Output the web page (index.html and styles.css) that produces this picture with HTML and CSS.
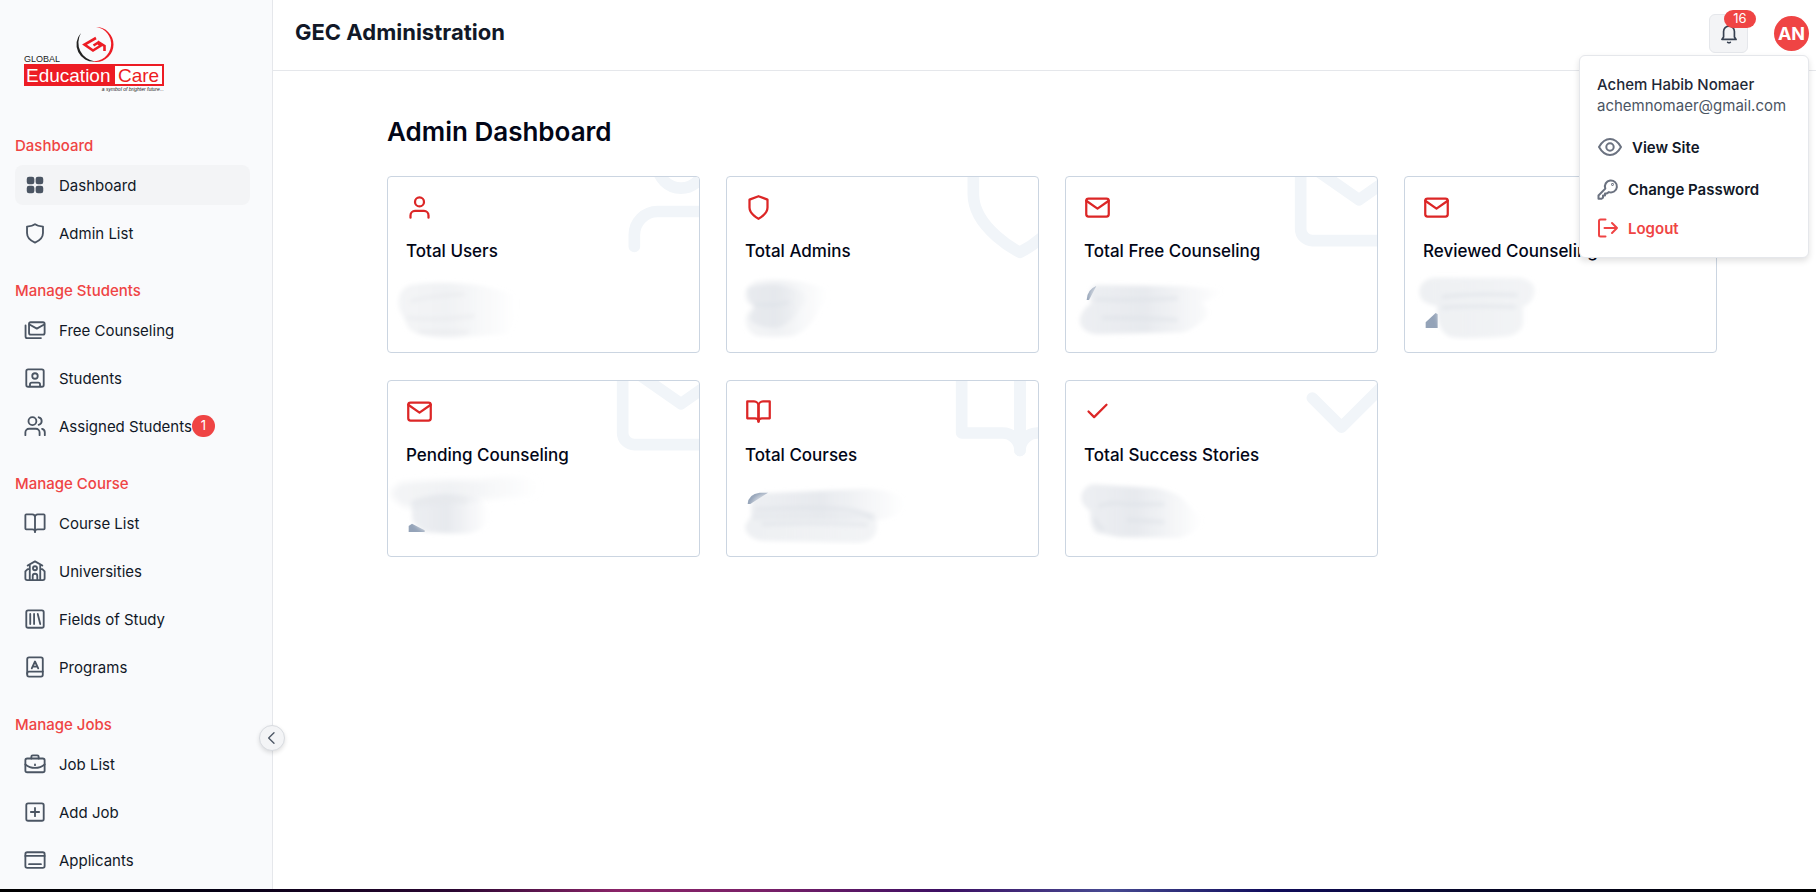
FILE: index.html
```html
<!DOCTYPE html>
<html lang="en">
<head>
<meta charset="utf-8">
<title>GEC Administration</title>
<link rel="stylesheet" href="styles.css">
</head>
<body>
<svg class="sprite" aria-hidden="true">
  <defs>
    <symbol id="user" viewBox="0 0 24 24"><path d="M20 21v-2a4 4 0 0 0-4-4H8a4 4 0 0 0-4 4v2"/><circle cx="12" cy="7" r="4"/></symbol>
    <symbol id="shield" viewBox="0 0 24 24"><path d="M12 22s8-4 8-10V5l-8-3-8 3v7c0 6 8 10 8 10z"/></symbol>
    <symbol id="mail" viewBox="0 0 24 24"><path d="M4 4h16a2 2 0 0 1 2 2v12a2 2 0 0 1-2 2H4a2 2 0 0 1-2-2V6a2 2 0 0 1 2-2z"/><path d="M22 6l-10 7L2 6"/></symbol>
    <symbol id="book" viewBox="0 0 24 24"><path d="M2 3h6a4 4 0 0 1 4 4v14a3 3 0 0 0-3-3H2z"/><path d="M22 3h-6a4 4 0 0 0-4 4v14a3 3 0 0 1 3-3h7z"/></symbol>
    <symbol id="check" viewBox="0 0 24 24"><path d="M20 6L9 17l-5-5"/></symbol>
    <linearGradient id="fade"><stop offset="0" stop-color="#e3e6eb" stop-opacity=".65"/><stop offset=".45" stop-color="#e3e6eb" stop-opacity=".85"/><stop offset="1" stop-color="#e3e6eb" stop-opacity="0"/></linearGradient>
    <linearGradient id="fade-light"><stop offset="0" stop-color="#eceef1" stop-opacity=".6"/><stop offset=".4" stop-color="#eceef1" stop-opacity=".8"/><stop offset="1" stop-color="#eceef1" stop-opacity="0"/></linearGradient>
    <linearGradient id="solid"><stop offset="0" stop-color="#e6e9ed" stop-opacity=".7"/><stop offset="1" stop-color="#e6e9ed" stop-opacity=".5"/></linearGradient>
    <filter id="soft" x="-20%" y="-30%" width="140%" height="160%"><feGaussianBlur stdDeviation="6"/></filter>
    <filter id="softer" x="-20%" y="-100%" width="140%" height="300%"><feGaussianBlur stdDeviation="9"/></filter>
  </defs>
</svg>
<div class="app">
  <aside class="sidebar">
    <a class="logo" href="#" aria-label="Global Education Care">
      <svg width="142" height="68" viewBox="23 25 142 68">
        <path d="M81 33a17 17 0 0 0 14 28.500a19 19 0 0 1-14-28.500z" fill="#222"/>
        <path d="M96 27a17.500 17.500 0 0 1 0 35l-4-1a16.500 16.500 0 0 0 4-34z" fill="#ed1c24"/>
        <path d="M96 38L84.500 44.500l8.500 6 8-5-3.500-2.500-4 2.500M97.500 41.500l7 4.500v5" fill="none" stroke="#ed1c24" stroke-width="2.600" stroke-linecap="butt" stroke-linejoin="miter"/>
        <rect x="24" y="64" width="140" height="22" fill="#ed1c24"/>
        <rect x="115" y="66" width="47" height="18" fill="#fff"/>
        <text x="24" y="62" class="logo-global">GLOBAL</text>
        <text x="26" y="82" class="logo-main">Education</text>
        <text x="118" y="82" class="logo-main logo-red">Care</text>
        <text x="164" y="91" text-anchor="end" class="logo-tag">a symbol of brighter future...</text>
      </svg>
    </a>
    <nav class="nav">
      <section class="group">
        <h2>Dashboard</h2>
        <a class="item active" href="#"><svg class="ico filled" viewBox="0 0 24 24"><rect x="3" y="3" width="8.300" height="8.300" rx="2.500"/><rect x="12.700" y="3" width="8.300" height="8.300" rx="2.500"/><rect x="3" y="12.700" width="8.300" height="8.300" rx="2.500"/><rect x="12.700" y="12.700" width="8.300" height="8.300" rx="2.500"/></svg>Dashboard</a>
        <a class="item" href="#"><svg class="ico" viewBox="0 0 24 24"><path d="M12 2.300c2.500 2 5.500 2.400 8.700 2.700v7c0 5-4 8.500-8.700 10.500C7.300 20.500 3.300 17 3.300 12V5C6.500 4.700 9.500 4.300 12 2.300z"/></svg>Admin List</a>
      </section>
      <section class="group">
        <h2>Manage Students</h2>
        <a class="item" href="#"><svg class="ico" viewBox="0 0 24 24"><rect x="5.500" y="3.500" width="17" height="13.500" rx="1.800"/><path d="M6 6l8 4.500L22 6M1.700 7v12a1.800 1.800 0 0 0 1.800 1.800h15"/></svg>Free Counseling</a>
        <a class="item" href="#"><svg class="ico" viewBox="0 0 24 24"><rect x="2.500" y="2.500" width="19" height="19" rx="2"/><circle cx="12" cy="9.800" r="3"/><path d="M6.500 21v-2a2 2 0 0 1 2-2h7a2 2 0 0 1 2 2v2"/></svg>Students</a>
        <a class="item" href="#"><svg class="ico" viewBox="0 0 24 24"><path d="M17 22v-3a4 4 0 0 0-4-4H5.500a4 4 0 0 0-4 4v3M22.700 22v-3a4 4 0 0 0-3-3.900M16 2.500a4.200 4.200 0 0 1 0 8.200"/><circle cx="9.200" cy="6.700" r="4.300"/></svg>Assigned Students<span class="count">1</span></a>
      </section>
      <section class="group">
        <h2>Manage Course</h2>
        <a class="item" href="#"><svg class="ico" viewBox="0 0 24 24"><path d="M12 22V5.500a3 3 0 0 0-3-3H2.500a1 1 0 0 0-1 1V18a1 1 0 0 0 1 1H9c1.700 0 3 1 3 2.500 0-1.500 1.300-2.500 3-2.500h6.500a1 1 0 0 0 1-1V3.500a1 1 0 0 0-1-1H15a3 3 0 0 0-3 3"/></svg>Course List</a>
        <a class="item" href="#"><svg class="ico" viewBox="0 0 24 24"><path d="M4 6l8-4.500L20 6M6.300 5v17M17.700 5v17M6.300 10H4l-2.500 2.500V20a2 2 0 0 0 2 2h17a2 2 0 0 0 2-2v-7.500L20 10h-2.300M9.500 22v-4.500a2.500 2.500 0 0 1 5 0V22"/><circle cx="12" cy="9" r="2.200"/></svg>Universities</a>
        <a class="item" href="#"><svg class="ico" viewBox="0 0 24 24"><rect x="2.500" y="2.500" width="19" height="19" rx="2"/><path d="M6.800 6.500v11M11 6.500v11M15 6.500l2.700 11"/></svg>Fields of Study</a>
        <a class="item" href="#"><svg class="ico" viewBox="0 0 24 24"><rect x="3.500" y="1.500" width="17" height="21" rx="2"/><path d="M3.500 19.500a2 2 0 0 1 2-2.500h15M8.500 13.500L12 6l3.500 7.500M9.500 11.500h5"/></svg>Programs</a>
      </section>
      <section class="group">
        <h2>Manage Jobs</h2>
        <a class="item" href="#"><svg class="ico" viewBox="0 0 24 24"><rect x="1.500" y="6" width="21" height="15" rx="2"/><path d="M8 6V4a1.500 1.500 0 0 1 1.500-1.500h5A1.500 1.500 0 0 1 16 4v2M1.500 12.500c6 5 15 5 21 0M12 12.500v.8"/></svg>Job List</a>
        <a class="item" href="#"><svg class="ico" viewBox="0 0 24 24"><rect x="2.500" y="2.500" width="19" height="19" rx="2"/><path d="M12 7.500v9M7.500 12h9"/></svg>Add Job</a>
        <a class="item" href="#"><svg class="ico" viewBox="0 0 24 24"><rect x="1.500" y="3.500" width="21" height="17" rx="2"/><path d="M1.500 7.500h21M5.500 16.500h13"/></svg>Applicants</a>
      </section>
    </nav>
    <button class="collapse" aria-label="Collapse sidebar"><svg width="16" height="16" viewBox="0 0 24 24"><path d="M15 4l-8 8 8 8"/></svg></button>
  </aside>
  <div class="page">
    <header class="topbar">
      <h1>GEC Administration</h1>
      <div class="tools">
        <button class="bell" aria-label="Notifications">
          <svg width="20" height="20" viewBox="0 0 24 24"><path d="M3.500 18.500h17L18.500 15.500V9a6.500 6.500 0 0 0-13 0v6.500zM10.500 22q1.500 1 3 0"/></svg>
          <span class="badge">16</span>
        </button>
        <div class="account">
          <button class="avatar" aria-haspopup="true" aria-expanded="true">AN</button>
          <div class="menu">
            <p class="name">Achem Habib Nomaer</p>
            <p class="email">achemnomaer@gmail.com</p>
            <a href="#"><svg width="26" height="26" viewBox="0 0 26 26"><path d="M2 13c3-5.300 6.700-8 11-8s8 2.700 11 8c-3 5.300-6.700 8-11 8s-8-2.700-11-8z"/><circle cx="13" cy="13" r="3.700"/></svg>View Site</a>
            <a href="#"><svg width="22" height="22" viewBox="0 0 22 22"><path d="M8.300 10.600a6 6 0 1 1 3.600 3.500l-2.400 1.500H8v2H6v2l-1.500 1.200H1.500v-3.300z"/><circle cx="15.500" cy="6.500" r=".4"/></svg>Change Password</a>
            <a class="logout" href="#"><svg width="22" height="22" viewBox="0 0 22 22"><path d="M8.500 2.500h-5a1.500 1.500 0 0 0-1.500 1.500v14a1.500 1.500 0 0 0 1.500 1.500h5M7.500 11H20M15 6l5 5-5 5"/></svg>Logout</a>
          </div>
        </div>
      </div>
    </header>
    <main class="content">
      <h2>Admin Dashboard</h2>
      <div class="cards">
        <article class="card">
          <svg class="ghost" aria-hidden="true"><use href="#user"/></svg>
          <svg class="mark" aria-hidden="true"><use href="#user"/></svg>
          <h3>Total Users</h3>
          <svg class="value" viewBox="51 498 540 222" aria-hidden="true"><g filter="url(#soft)"><path fill="url(#fade-light)" d="M120 552Q200 540 300 550Q400 562 440 590Q450 630 415 700Q300 705 260 710Q140 712 115 680Q100 650 88 625Q75 570 120 552z"/><path d="M125 600Q180 585 280 580M115 650Q200 660 310 645M150 693Q230 693 290 693" class="streak pale"/></g></svg>
        </article>
        <article class="card">
          <svg class="ghost" aria-hidden="true"><use href="#shield"/></svg>
          <svg class="mark" aria-hidden="true"><use href="#shield"/></svg>
          <h3>Total Admins</h3>
          <svg class="value" viewBox="49 318 540 222" aria-hidden="true"><g filter="url(#soft)"><path fill="url(#fade-light)" d="M140 360Q200 352 270 362L350 380Q380 410 330 440Q310 500 250 525Q180 530 140 525Q105 510 108 470Q112 450 132 438Q105 425 106 400Q112 370 140 360z"/><path fill="url(#fade)" d="M112 380Q190 360 260 385Q330 410 270 440Q250 490 200 500Q130 500 118 470L135 438Q110 420 112 380z"/><path d="M140 430Q190 436 235 424" class="streak"/></g></svg>
        </article>
        <article class="card">
          <svg class="ghost" aria-hidden="true"><use href="#mail"/></svg>
          <svg class="mark" aria-hidden="true"><use href="#mail"/></svg>
          <h3>Total Free Counseling</h3>
          <svg class="value" viewBox="46 318 540 222" aria-hidden="true"><path d="M111 417Q112 386 140 375L118 417z" fill="#94a3b8"/><g filter="url(#soft)"><path fill="url(#fade)" d="M140 372L400 376L520 385Q510 410 455 425Q480 440 470 470Q440 500 400 514L140 520Q85 510 91 470Q100 440 125 428Q110 385 140 372z"/><path d="M140 415Q260 420 380 412M160 470Q270 470 380 476" class="streak"/></g></svg>
        </article>
        <article class="card">
          <svg class="ghost" aria-hidden="true"><use href="#mail"/></svg>
          <svg class="mark" aria-hidden="true"><use href="#mail"/></svg>
          <h3>Reviewed Counseling</h3>
          <svg class="value" viewBox="43 318 540 222" aria-hidden="true"><path d="M108 501V484L138 456L144 460V501z" fill="#94a3b8"/><g filter="url(#soft)"><path fill="url(#solid)" d="M135 350H390Q440 360 434 395Q430 425 400 437V490Q395 515 360 525Q230 537 180 527Q140 510 142 435L120 430Q85 420 90 385Q95 355 135 350z"/><path d="M160 408Q250 395 380 402M160 440Q250 432 375 438" class="streak"/></g></svg>
        </article>
        <article class="card">
          <svg class="ghost" aria-hidden="true"><use href="#mail"/></svg>
          <svg class="mark" aria-hidden="true"><use href="#mail"/></svg>
          <h3>Pending Counseling</h3>
          <svg class="value" viewBox="52 315 540 222" aria-hidden="true"><path d="M117 498V480L127 473L165 493V498z" fill="#94a3b8"/><g filter="url(#softer)"><path fill="url(#fade-light)" d="M90 350Q200 340 330 342Q430 325 500 340Q525 360 500 390L350 400L110 425Q60 400 65 375z"/></g><g filter="url(#soft)"><path fill="url(#fade)" d="M125 405Q200 370 320 395Q365 420 362 460Q350 490 300 502Q200 503 165 497Q125 475 127 450z"/><path d="M150 408Q230 395 290 408" class="streak pale"/></g></svg>
        </article>
        <article class="card">
          <svg class="ghost" aria-hidden="true"><use href="#book"/></svg>
          <svg class="mark" aria-hidden="true"><use href="#book"/></svg>
          <h3>Total Courses</h3>
          <svg class="value" viewBox="49 315 540 222" aria-hidden="true"><path d="M114 414Q116 384 150 380H175L122 414z" fill="#94a3b8"/><g filter="url(#soft)"><path fill="url(#fade)" d="M160 382L470 368Q590 375 588 415Q570 455 510 462H130Q108 400 160 382z"/><path fill="url(#solid)" d="M130 440H495Q505 470 500 495Q490 530 440 530L160 524Q110 520 106 480z"/><path d="M140 430Q300 420 410 430Q470 440 485 455M160 475Q300 470 470 476" class="streak"/></g></svg>
        </article>
        <article class="card">
          <svg class="ghost" aria-hidden="true"><use href="#check"/></svg>
          <svg class="mark" aria-hidden="true"><use href="#check"/></svg>
          <h3>Total Success Stories</h3>
          <svg class="value" viewBox="46 315 540 222" aria-hidden="true"><g filter="url(#soft)"><path fill="url(#fade)" d="M130 355L320 366Q390 380 410 410L460 460Q450 500 390 515L210 514L140 500Q118 480 122 435Q90 415 96 385Q105 358 130 355z"/><path d="M150 420Q190 405 230 415H340M235 462Q290 465 340 468M138 460Q140 478 160 488" class="streak"/></g></svg>
        </article>
      </div>
    </main>
  </div>
</div>
<div class="strip"></div>
</body>
</html>
```
FILE: styles.css
```css
* { box-sizing: border-box; margin: 0; padding: 0; }
body {
  display: flex;
  flex-direction: column;
  height: 100vh;
  overflow: hidden;
  font-family: Inter, "Liberation Sans", sans-serif;
  font-size: 15px;
  color: #111827;
  background: #fff;
}
a { color: inherit; text-decoration: none; }
button { font: inherit; cursor: pointer; }
svg { fill: none; stroke-linecap: round; stroke-linejoin: round; flex: none; }
.sprite { position: absolute; width: 0; height: 0; }
.app { flex: 1; min-height: 0; display: flex; }

.sidebar {
  position: relative;
  flex: 0 0 273px;
  padding: 25px 22px 0 15px;
  background: #f9fafc;
  border-right: 1px solid #e5e7eb;
}
.logo { display: block; margin: 0 0 39px 8px; }
.logo svg { display: block; }
.logo text { font-family: "Liberation Sans", sans-serif; }
.logo-global { font-size: 9px; fill: #222; }
.logo-main { font-size: 19px; fill: #fff; }
.logo-main.logo-red { fill: #ed1c24; }
.logo-tag { font-size: 5px; font-style: italic; fill: #222; }
.nav { display: flex; flex-direction: column; gap: 24px; }
.group { display: flex; flex-direction: column; gap: 8px; }
.group h2 { margin-bottom: -2px; font-size: 15px; line-height: 27px; font-weight: 500; color: #ef4444; }
.item {
  display: flex;
  align-items: center;
  height: 40px;
  padding-left: 9px;
  border-radius: 8px;
}
.item.active { background: #f3f4f6; }
.ico { width: 22px; height: 22px; margin-right: 13px; stroke: #4b5563; stroke-width: 2; }
.ico.filled { fill: #4b5563; stroke: none; }
.count {
  width: 23px;
  height: 22px;
  border-radius: 11px;
  background: #ef4444;
  color: #fff;
  font-size: 13px;
  line-height: 20px;
  text-align: center;
}
.collapse {
  position: absolute;
  right: -13px;
  top: 725px;
  width: 26px;
  height: 26px;
  display: grid;
  place-items: center;
  border: 1px solid #d8dbe0;
  border-radius: 50%;
  background: #f3f4f6;
  box-shadow: 0 2px 4px rgba(0, 0, 0, .12);
}
.collapse svg { stroke: #4b5563; stroke-width: 2; }

.page { flex: 1; min-width: 0; }
.topbar {
  display: flex;
  align-items: center;
  justify-content: space-between;
  height: 71px;
  padding: 0 7px 3px 22px;
  border-bottom: 1px solid #e5e7eb;
}
.topbar h1 { padding-bottom: 3px; font-size: 22px; line-height: 28px; font-weight: 700; }
.tools { display: flex; align-items: center; gap: 26px; }
.bell {
  position: relative;
  width: 39px;
  height: 39px;
  display: grid;
  place-items: center;
  border: 1px solid #e5e7eb;
  border-radius: 6px;
  background: #f3f4f6;
}
.bell svg { stroke: #374151; stroke-width: 2; }
.badge {
  position: absolute;
  left: 14px;
  top: -5px;
  width: 32px;
  height: 18px;
  border-radius: 9px;
  background: #ef4444;
  color: #fff;
  font-size: 13px;
  line-height: 16px;
}
.account { position: relative; display: flex; }
.avatar {
  width: 35px;
  height: 35px;
  border: 0;
  border-radius: 50%;
  background: #ef4444;
  color: #fff;
  font-size: 18px;
  line-height: 32px;
  font-weight: 700;
}
.menu {
  position: absolute;
  z-index: 2;
  top: 39px;
  right: 0;
  min-width: 230px;
  padding: 18px 17px;
  background: #fff;
  border: 1px solid #e5e7eb;
  border-radius: 6px;
  box-shadow: 0 3px 6px rgba(0, 0, 0, .12);
  line-height: 21px;
  white-space: nowrap;
}
.name { font-weight: 500; color: #1f2937; }
.email { color: #4b5563; }
.menu a { display: flex; align-items: center; gap: 9px; margin-top: 18px; font-weight: 600; }
.menu svg { stroke: #6b7280; stroke-width: 2; }
.menu .logout { margin-top: 17px; color: #ef4444; }
.menu .logout svg { stroke: #ef4444; }

.content { padding: 43px 99px 0 114px; }
.content h2 { font-size: 26px; line-height: 36px; font-weight: 600; color: #020617; }
.cards { display: grid; grid-template-columns: repeat(4, 1fr); gap: 27px 26px; margin-top: 26px; }
.card {
  position: relative;
  overflow: hidden;
  padding: 17px 18px 11px;
  border: 1px solid #cbd5e1;
  border-radius: 4px;
}
.ghost { position: absolute; top: -53px; right: -52px; width: 140px; height: 140px; stroke: #f1f5f9; stroke-width: 2; }
.mark { display: block; width: 27px; height: 27px; stroke: #dc2626; stroke-width: 2; }
.card h3 { margin-top: 16px; font-size: 17px; line-height: 28px; font-weight: 500; color: #020617; }
.value { display: block; width: 180px; height: 74px; margin: 2px 0 0 -19px; }
.streak { stroke: #dde1e7; stroke-width: 9; stroke-opacity: .7; }
.streak.pale { stroke: #e8eaed; }

.strip {
  flex: 0 0 3px;
  background: linear-gradient(90deg, #000 0%, #050014 12%, #2a0632 25%, #8a2468 34%, #7a2068 42%, #3c0f63 52%, #474a92 61%, #100c5c 70%, #06062a 80%, #000 100%);
}
```
